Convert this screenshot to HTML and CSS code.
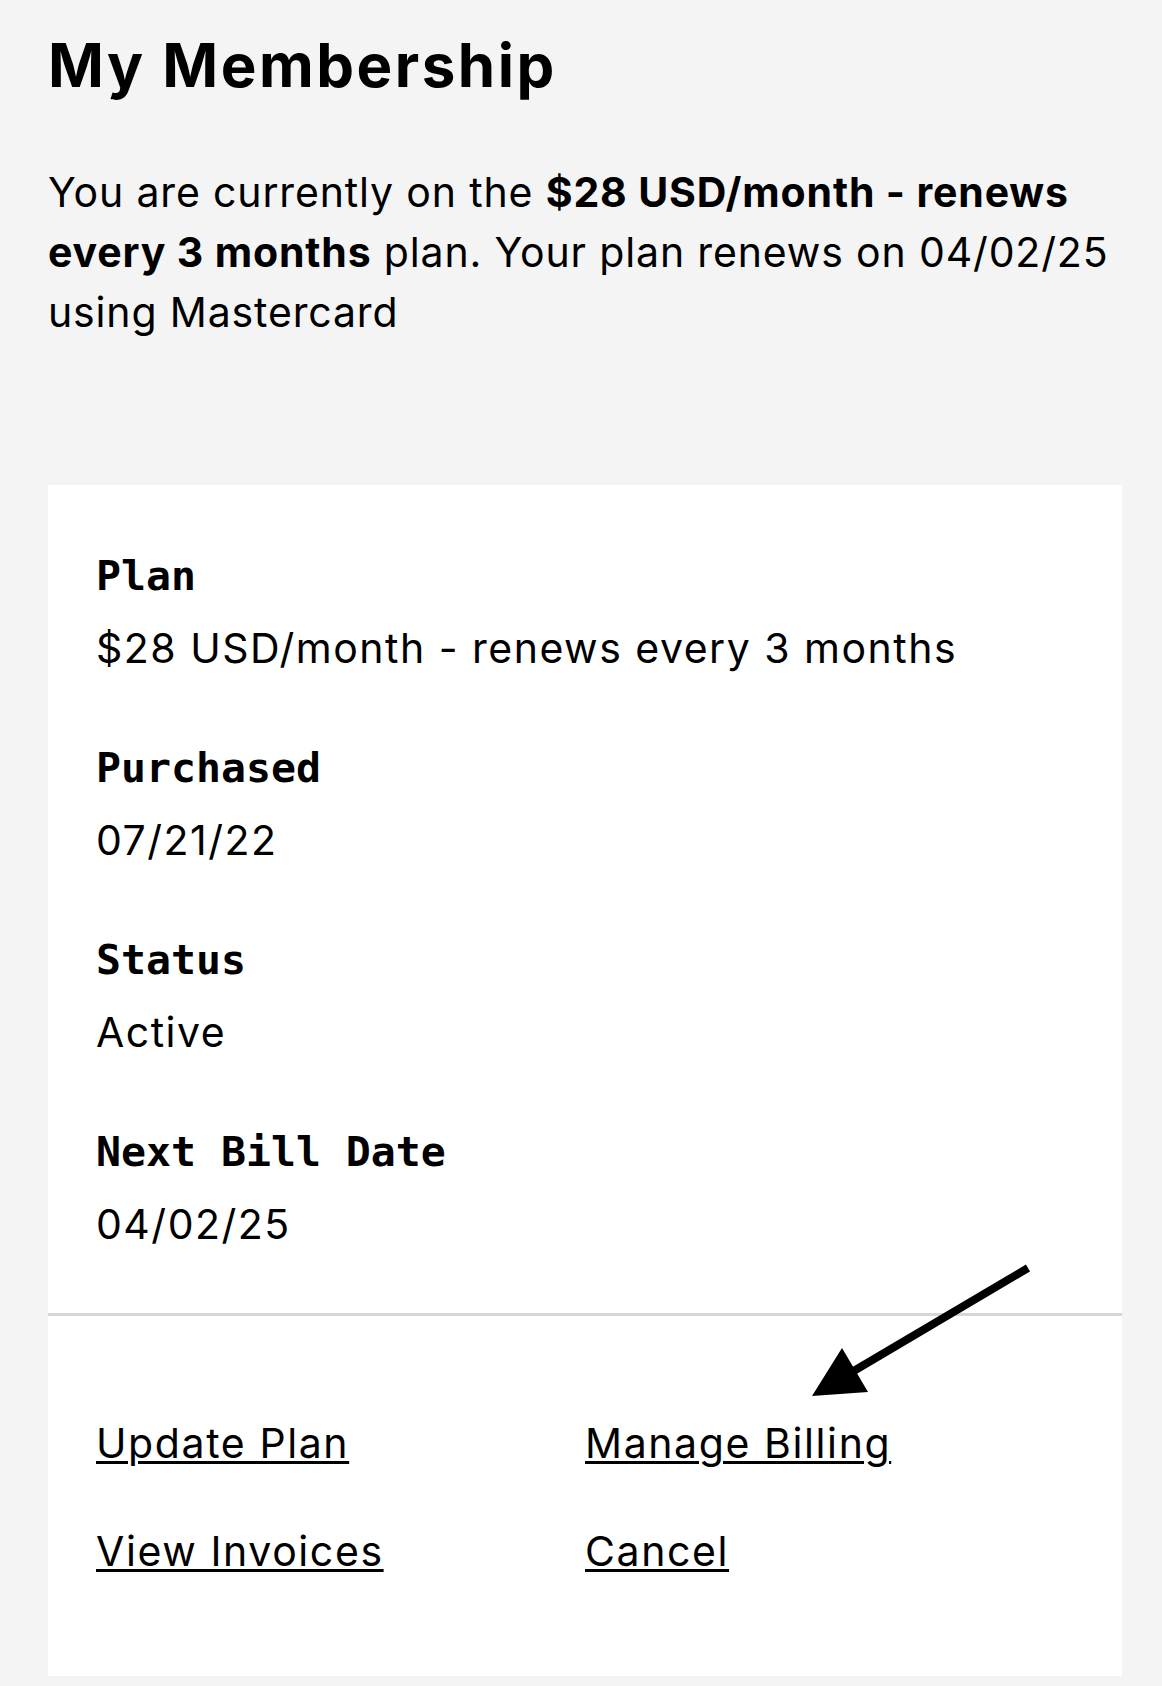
FILE: index.html
```html
<!DOCTYPE html>
<html lang="en">
<head>
<meta charset="utf-8">
<title>My Membership</title>
<link rel="stylesheet" href="styles.css">
</head>
<body>
<main class="page">
  <h1 class="title">My Membership</h1>
  <p class="summary">You are currently on the <strong>$28 USD/month - renews every 3 months</strong> plan. Your plan renews on 04/02/25 using Mastercard</p>
  <section class="card">
    <dl class="details">
      <div class="item"><dt>Plan</dt><dd>$28 USD/month - renews every 3 months</dd></div>
      <div class="item"><dt>Purchased</dt><dd>07/21/22</dd></div>
      <div class="item"><dt>Status</dt><dd>Active</dd></div>
      <div class="item"><dt>Next Bill Date</dt><dd>04/02/25</dd></div>
    </dl>
    <div class="actions">
      <a class="action" href="#">Update Plan</a>
      <a class="action" href="#">Manage Billing</a>
      <a class="action" href="#">View Invoices</a>
      <a class="action" href="#">Cancel</a>
    </div>
    <svg class="pointer" width="240" height="150" viewBox="0 0 240 150" aria-hidden="true">
      <line x1="228" y1="13" x2="52" y2="117" stroke="#000" stroke-width="8"/>
      <polygon points="12,141 42,93 68,137" fill="#000"/>
    </svg>
  </section>
</main>
</body>
</html>
```
FILE: styles.css
```css
* { box-sizing: border-box; }

body {
  margin: 0;
  background: #f4f4f4;
  color: #000;
  font-family: Inter, "Liberation Sans", sans-serif;
}

.page {
  padding: 29px 40px 0 48px;
}

.title {
  margin: 0;
  font-size: 60px;
  font-weight: 700;
  line-height: 72px;
  letter-spacing: 2.5px;
}

.summary {
  margin: 61px 0 0;
  font-size: 41px;
  line-height: 60px;
  letter-spacing: 0.85px;
}

.summary strong {
  font-weight: 700;
}

.card {
  position: relative;
  margin-top: 143px;
  background: #fff;
}

.details {
  margin: 0;
  padding: 66px 48px 59px;
  border-bottom: 3px solid #d6d6d6;
}

.item + .item {
  margin-top: 65px;
}

.details dt {
  font-family: "DejaVu Sans Mono", "Liberation Mono", monospace;
  font-weight: 700;
  font-size: 41.5px;
  line-height: 50px;
  margin-bottom: 17px;
}

.details dd {
  margin: 0;
  font-size: 41px;
  line-height: 60px;
  letter-spacing: 1.5px;
}

.actions {
  display: grid;
  grid-template-columns: 1fr 1fr;
  row-gap: 48px;
  padding: 97px 48px 95px;
}

.action {
  justify-self: start;
  color: #000;
  font-size: 41px;
  line-height: 60px;
  letter-spacing: 1.6px;
  text-decoration: underline;
  text-decoration-thickness: 3px;
  text-underline-offset: 3px;
}

.pointer {
  position: absolute;
  left: 752px;
  top: 770px;
}
```
